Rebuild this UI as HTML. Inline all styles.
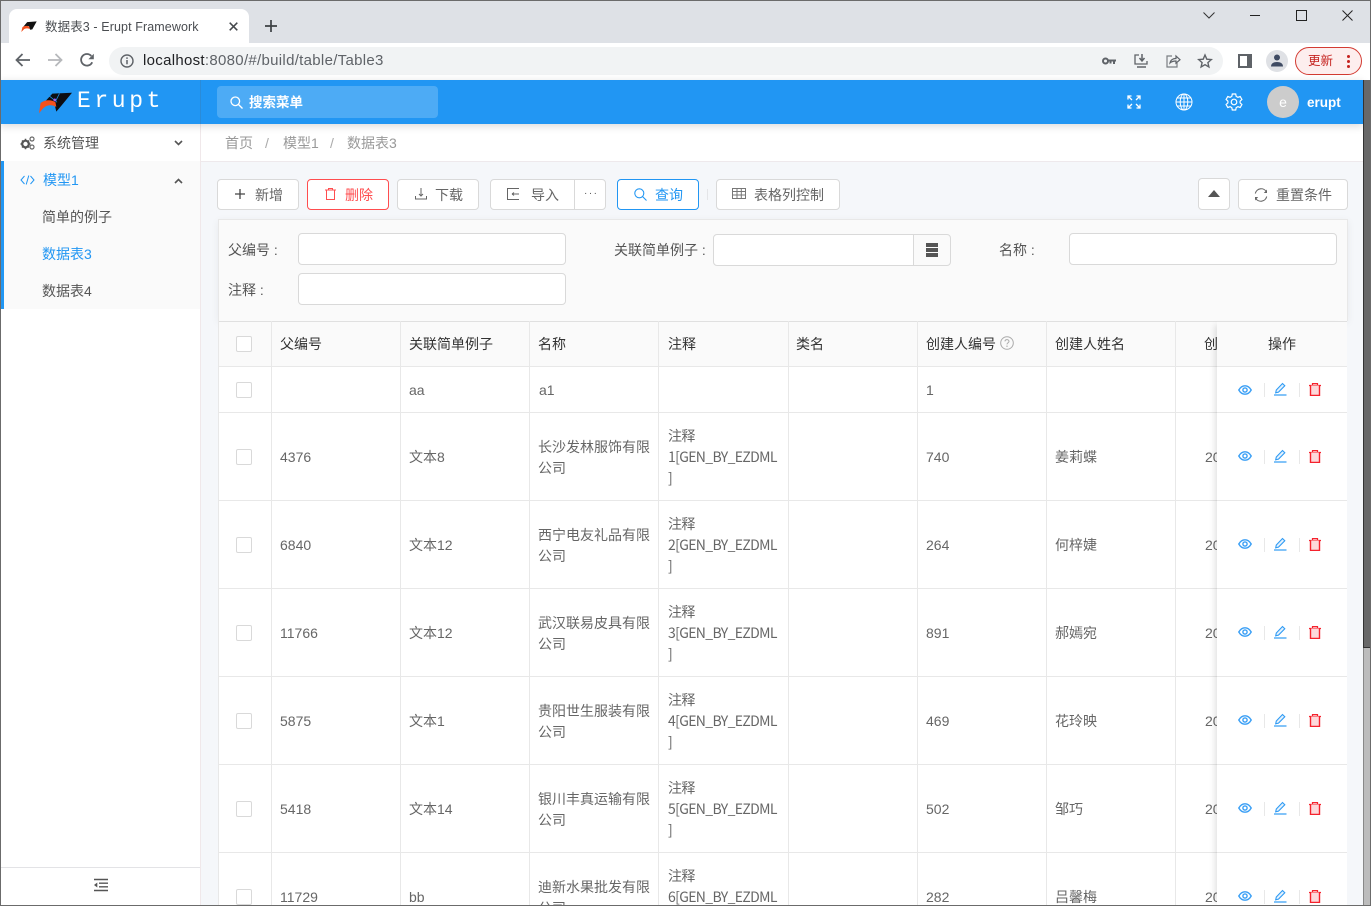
<!DOCTYPE html>
<html lang="zh">
<head>
<meta charset="utf-8">
<title>数据表3 - Erupt Framework</title>
<style>
*{box-sizing:border-box}
html,body{margin:0;padding:0;width:1371px;height:906px;overflow:hidden;background:#fff}
body{position:relative;font-family:"Liberation Sans","Noto Sans CJK SC",sans-serif;font-size:14px;color:#666}
.a,.t,svg.i{position:absolute}
.t{white-space:nowrap;line-height:20px}
.btn{position:absolute;top:179px;height:31px;background:#fff;border:1px solid #d9d9d9;border-radius:4px}
.inp{position:absolute;height:32px;background:#fff;border:1px solid #d9d9d9;border-radius:4px}
.lbl{color:#555}
.r{position:absolute;left:218px;width:1129px;height:88px;border-bottom:1px solid #e8e8e8;background:#fff}
.r>div{position:absolute;top:0;height:87px;padding-top:2px;display:flex;align-items:center;line-height:21px;white-space:nowrap;color:#666}
.r>div.c4{font-family:"Noto Sans CJK SC","Liberation Sans",sans-serif;letter-spacing:-.65px}
.c1{left:62px}.c2{left:191px}.c3{left:320px}.c4{left:450px}.c6{left:708px}.c7{left:837px}.c8{left:987px}
.cb{position:absolute;left:236px;width:16px;height:16px;background:#fff;border:1px solid #d9d9d9;border-radius:2px}
.vl{position:absolute;top:321px;width:1px;height:585px;background:#e8e8e8}
.th{position:absolute;top:334px;line-height:20px;color:#333;white-space:nowrap}
.fx{position:absolute;left:0;width:130px;height:88px;border-bottom:1px solid #e8e8e8}
.sep{position:absolute;width:1px;height:14px;background:#e8e8e8}
svg{overflow:visible}
</style>
</head>
<body>
<svg width="0" height="0" style="position:absolute">
<defs>
<symbol id="eye" viewBox="0 0 14 10"><path d="M.8 5C2.500 2 4.600.8 7 .8S11.500 2 13.200 5C11.500 8 9.400 9.200 7 9.200S2.500 8 .8 5z" fill="none" stroke="#3a9ff5" stroke-width="1.400"/><circle cx="7" cy="5" r="2.100" fill="none" stroke="#3a9ff5" stroke-width="1.400"/></symbol>
<symbol id="edit" viewBox="0 0 14 14"><path d="M1 13h12.500" stroke="#2f9bf4" stroke-width="1.200" fill="none"/><path d="M2.700 10.800l.6-2.800L9.500 1.500l2.300 2.200-6.300 6.400z" fill="#e3f1fd" stroke="#2f9bf4" stroke-width="1.100"/></symbol>
<symbol id="trash" viewBox="0 0 12 13"><path d="M0 2.500h12M3.500 2.500V.6h5v1.900" fill="none" stroke="#f5222d" stroke-width="1.200"/><path d="M1.500 2.500v10h9v-10" fill="#fdd9db" stroke="#f5222d" stroke-width="1.400"/></symbol>
</defs>
</svg>

<!-- browser chrome -->
<div class="a" style="left:0;top:0;width:1371px;height:43px;background:#dee1e6"></div>
<div class="a" style="left:9px;top:9px;width:240px;height:34px;background:#fff;border-radius:8px 8px 0 0"></div>
<svg class="i" style="left:20px;top:21px" width="18" height="11" viewBox="0 0 42 30"><path d="M6 15L16 3l26-2-12 22-6 1-3-10z" fill="#111"/><path d="M0 30l3-13c5-4 14-5 19-1l1 6c-6-3-14-2-17 2z" fill="#f4511e"/></svg>
<div class="t" style="left:45px;top:17px;font-size:12.500px;color:#4a4d51;letter-spacing:.1px">数据表3 - Erupt Framework</div>
<svg class="i" style="left:229px;top:22px" width="9" height="9" viewBox="0 0 9 9"><path d="M.7.7l7.600 7.600M8.300.7L.7 8.300" stroke="#45484c" stroke-width="1.500"/></svg>
<svg class="i" style="left:265px;top:20px" width="12" height="12" viewBox="0 0 12 12"><path d="M6 0v12M0 6h12" stroke="#3c4043" stroke-width="1.700"/></svg>
<svg class="i" style="left:1203px;top:12px" width="12" height="7" viewBox="0 0 12 7"><path d="M.5.500L6 6l5.500-5.500" fill="none" stroke="#333" stroke-width="1"/></svg>
<div class="a" style="left:1250px;top:15px;width:10px;height:1px;background:#222"></div>
<div class="a" style="left:1296px;top:10px;width:11px;height:11px;border:1.300px solid #222"></div>
<svg class="i" style="left:1342px;top:10px" width="11" height="11" viewBox="0 0 11 11"><path d="M.5.500l10 10M10.500.500l-10 10" stroke="#222" stroke-width="1"/></svg>

<div class="a" style="left:0;top:43px;width:1371px;height:37px;background:#fff"></div>
<svg class="i" style="left:15px;top:53px" width="16" height="14" viewBox="0 0 16 14"><path d="M15 7H2M7.500 1L1.500 7l6 6" fill="none" stroke="#5f6368" stroke-width="1.800"/></svg>
<svg class="i" style="left:47px;top:53px" width="16" height="14" viewBox="0 0 16 14"><path d="M1 7h13M8.500 1l6 6-6 6" fill="none" stroke="#b6b8bb" stroke-width="1.800"/></svg>
<svg class="i" style="left:80px;top:53px" width="14" height="14" viewBox="0 0 14 14"><path d="M12.200 9.200A5.800 5.800 0 1 1 11.300 3" fill="none" stroke="#5f6368" stroke-width="1.800"/><path d="M13.800.8v5.400H8.400z" fill="#5f6368"/></svg>
<div class="a" style="left:109px;top:47px;width:1114px;height:28px;background:#f1f3f4;border-radius:14px"></div>
<svg class="i" style="left:120px;top:54px" width="14" height="14" viewBox="0 0 14 14"><circle cx="7" cy="7" r="6" fill="none" stroke="#5f6368" stroke-width="1.400"/><path d="M7 6v4.200M7 3.400v1.500" stroke="#5f6368" stroke-width="1.500"/></svg>
<div class="t" style="left:143px;top:51px;font-size:15px;letter-spacing:.3px;color:#5f6368"><span style="color:#202124">localhost</span>:8080/#/build/table/Table3</div>
<svg class="i" style="left:1102px;top:57px" width="14" height="8" viewBox="0 0 14 8"><circle cx="3.500" cy="4" r="2.500" fill="none" stroke="#5f6368" stroke-width="2"/><path d="M6 2.500h8v2h-1v2.500h-2V4.500H9.500V6.500h-2V4.500H6z" fill="#5f6368"/></svg>
<svg class="i" style="left:1134px;top:54px" width="14" height="14" viewBox="0 0 14 14"><path d="M5 1H1v9h12V7" fill="none" stroke="#5f6368" stroke-width="1.300"/><path d="M3 13h9" stroke="#5f6368" stroke-width="1.500"/><path d="M8 0v6M5.500 4L8 7l2.500-3" fill="none" stroke="#5f6368" stroke-width="1.500"/></svg>
<svg class="i" style="left:1166px;top:54px" width="14" height="14" viewBox="0 0 14 14"><path d="M6 2H1v11h10V9" fill="none" stroke="#7a7e82" stroke-width="1.200"/><path d="M4 9c.5-3 3-4.500 6-4.500V2l4 3.700-4 3.500V7C8 7 5.500 7.500 4 9z" fill="none" stroke="#5f6368" stroke-width="1.200"/></svg>
<svg class="i" style="left:1198px;top:54px" width="14" height="14" viewBox="0 0 14 14"><path d="M7 1l1.800 4.200 4.500.4-3.400 3 1 4.400L7 10.700 3.100 13l1-4.400-3.400-3 4.500-.4z" fill="none" stroke="#5f6368" stroke-width="1.400"/></svg>
<div class="a" style="left:1238px;top:54px;width:14px;height:14px;border:2px solid #5f6368;border-right-width:5px;background:#fff"></div>
<div class="a" style="left:1266px;top:50px;width:22px;height:22px;border-radius:50%;background:#dfe1e5"></div>
<svg class="i" style="left:1271px;top:54px" width="12" height="13" viewBox="0 0 12 13"><circle cx="6" cy="3.500" r="3" fill="#3f4b63"/><path d="M0 12.500c0-3 2.500-4.500 6-4.500s6 1.500 6 4.500z" fill="#3f4b63"/></svg>
<div class="a" style="left:1295px;top:47px;width:67px;height:28px;background:#fdeeee;border:1px solid #d33b32;border-radius:14px"></div>
<div class="t" style="left:1308px;top:51px;font-size:12.500px;color:#c5221f">更新</div>
<div class="a" style="left:1347px;top:55px;width:3px;height:3px;border-radius:50%;background:#c5221f"></div>
<div class="a" style="left:1347px;top:60px;width:3px;height:3px;border-radius:50%;background:#c5221f"></div>
<div class="a" style="left:1347px;top:65px;width:3px;height:3px;border-radius:50%;background:#c5221f"></div>

<!-- page bg -->
<div class="a" style="left:0;top:124px;width:1363px;height:782px;background:#f5f7fa"></div>

<!-- sidebar -->
<div class="a" style="left:0;top:124px;width:201px;height:782px;background:#fff;border-right:1px solid #f0e8ea"></div>
<div class="a" style="left:1px;top:161px;width:199px;height:148px;background:#fafafa"></div>
<div class="a" style="left:1px;top:161px;width:3px;height:148px;background:#2196f3"></div>
<svg class="i" style="left:20px;top:136px" width="15" height="14" viewBox="0 0 15 14"><circle cx="5.500" cy="8" r="3.300" fill="none" stroke="#555" stroke-width="2.200"/><path d="M5.500 2.800v2M5.500 11.200v2M.5 8h2M8.500 8h2M2 4.500l1.400 1.400M9 4.500L7.600 5.900M2 11.500l1.400-1.400M9 11.500l-1.400-1.400" stroke="#555" stroke-width="1.500"/><circle cx="12" cy="3" r="2" fill="none" stroke="#666" stroke-width="1.200"/><circle cx="12" cy="11" r="2" fill="none" stroke="#666" stroke-width="1.200"/></svg>
<div class="t" style="left:43px;top:133px;color:#555">系统管理</div>
<svg class="i" style="left:174px;top:140px" width="9" height="6" viewBox="0 0 9 6"><path d="M1 1l3.500 3.500L8 1" fill="none" stroke="#555" stroke-width="1.600"/></svg>
<svg class="i" style="left:20px;top:175px" width="15" height="10" viewBox="0 0 15 10"><path d="M4.500 1L1 5l3.500 4M10.500 1L14 5l-3.500 4M8.800.5L6.200 9.500" fill="none" stroke="#2196f3" stroke-width="1"/></svg>
<div class="t" style="left:43px;top:170px;color:#2196f3">模型1</div>
<svg class="i" style="left:174px;top:178px" width="9" height="6" viewBox="0 0 9 6"><path d="M1 5l3.500-3.500L8 5" fill="none" stroke="#555" stroke-width="1.600"/></svg>
<div class="t" style="left:42px;top:207px;color:#555">简单的例子</div>
<div class="t" style="left:42px;top:244px;color:#2196f3">数据表3</div>
<div class="t" style="left:42px;top:281px;color:#555">数据表4</div>
<div class="a" style="left:1px;top:867px;width:199px;height:1px;background:#e3e3e6"></div>
<svg class="i" style="left:93px;top:878px" width="16" height="14" viewBox="0 0 16 14"><path d="M1 1.500h14M6 5.200h9M6 8.800h9M1 12.500h14" stroke="#555" stroke-width="1.400"/><path d="M4.300 4.500v5L1 7z" fill="#555"/></svg>

<!-- breadcrumb -->
<div class="a" style="left:201px;top:124px;width:1162px;height:38px;background:#fff;border-bottom:1px solid #eee9ec"></div>
<div class="t" style="left:225px;top:133px;color:#999">首页</div>
<div class="t" style="left:265px;top:133px;color:#aaa">/</div>
<div class="t" style="left:283px;top:133px;color:#999">模型1</div>
<div class="t" style="left:330px;top:133px;color:#aaa">/</div>
<div class="t" style="left:347px;top:133px;color:#999">数据表3</div>

<!-- header -->
<div class="a" style="left:0;top:80px;width:1363px;height:44px;background:#2196f3;box-shadow:0 2px 8px rgba(0,0,0,.15)"></div>
<div class="a" style="left:200px;top:80px;width:1px;height:44px;background:#2a8bd8"></div>
<svg class="i" style="left:39px;top:92px" width="33" height="22" viewBox="0 0 42 28"><path d="M6 14L17 2 42 1 28 18l-6 7-3-13z" fill="#0d0d12"/><path d="M0 27l2-13C7 10 15 9 21 13l1 6C15 15 9 17 5 21z" fill="#f4511e"/><path d="M13 5l10 8M26 2l-5 10" stroke="#2196f3" stroke-width=".9"/><circle cx="20" cy="10" r="1.700" fill="#a05cf0"/></svg>
<div class="t" style="left:77px;top:87px;font-family:'Liberation Mono',monospace;font-size:23px;line-height:28px;color:#fff;letter-spacing:3.600px">Erupt</div>
<div class="a" style="left:217px;top:86px;width:221px;height:32px;background:rgba(255,255,255,.2);border-radius:4px"></div>
<svg class="i" style="left:230px;top:96px" width="13" height="13" viewBox="0 0 13 13"><circle cx="5.300" cy="5.300" r="4.300" fill="none" stroke="#fff" stroke-width="1.300"/><path d="M8.500 8.500l4 4" stroke="#fff" stroke-width="1.300"/></svg>
<div class="t" style="left:249px;top:93px;color:#fff;font-weight:bold;font-size:13.500px">搜索菜单</div>
<svg class="i" style="left:1127px;top:95px" width="14" height="14" viewBox="0 0 14 14"><path d="M1 4.500V1h3.500M1 1l4 4M13 4.500V1H9.500M13 1L9 5M1 9.500V13h3.500M1 13l4-4M13 9.500V13H9.500M13 13L9 9" fill="none" stroke="#fff" stroke-width="1.300"/></svg>
<svg class="i" style="left:1175px;top:93px" width="18" height="18" viewBox="0 0 18 18" fill="none" stroke="#fff" stroke-width="1"><circle cx="9" cy="9" r="8"/><ellipse cx="9" cy="9" rx="3.800" ry="8"/><path d="M9 1v16M1 9h16M2 5h14M2 13h14"/></svg>
<svg class="i" style="left:1225px;top:93px" width="18" height="18" viewBox="0 0 18 18"><path d="M7.300 1h3.400l.5 2.400 1.700.9 2.300-.8 1.700 3-1.800 1.600v1.800l1.800 1.600-1.700 3-2.300-.8-1.700.9-.5 2.400H7.300l-.5-2.400-1.700-.9-2.300.8-1.700-3 1.800-1.600V8.100L1.100 6.500l1.700-3 2.300.8 1.700-.9z" fill="none" stroke="#fff" stroke-width="1.200"/><circle cx="9" cy="9" r="2.800" fill="none" stroke="#fff" stroke-width="1.200"/></svg>
<div class="a" style="left:1267px;top:86px;width:32px;height:32px;border-radius:50%;background:#ccc"></div>
<div class="t" style="left:1267px;top:92px;width:32px;text-align:center;color:#fff">e</div>
<div class="t" style="left:1307px;top:93px;color:#fff;font-weight:bold;font-size:13.500px">erupt</div>

<!-- toolbar -->
<div class="btn" style="left:217px;width:82px"></div>
<svg class="i" style="left:235px;top:189px" width="10" height="10" viewBox="0 0 10 10"><path d="M5 0v10M0 5h10" stroke="#444" stroke-width="1.300"/></svg>
<div class="t" style="left:255px;top:185px;color:#666">新增</div>
<div class="btn" style="left:307px;width:82px;border-color:#ff4d4f"></div>
<svg class="i" style="left:325px;top:188px" width="11" height="12" viewBox="0 0 11 12"><path d="M0 2h11M3.500 2V.5h4V2M1.500 2v9.500h8V2" fill="none" stroke="#ff4d4f" stroke-width="1"/></svg>
<div class="t" style="left:345px;top:185px;color:#ff4d4f">删除</div>
<div class="btn" style="left:397px;width:82px"></div>
<svg class="i" style="left:415px;top:188px" width="12" height="12" viewBox="0 0 12 12"><path d="M6 0v8M4 6l2 2 2-2M.5 8v3h11V8" fill="none" stroke="#666" stroke-width="1"/></svg>
<div class="t" style="left:435px;top:185px;color:#666">下载</div>
<div class="btn" style="left:490px;width:116px"></div>
<div class="a" style="left:574px;top:179px;width:1px;height:31px;background:#d9d9d9"></div>
<svg class="i" style="left:507px;top:188px" width="13" height="12" viewBox="0 0 13 12"><path d="M12 .5H.5v11H12M5 6h7M5 6l2-1.500M5 6l2 1.500" fill="none" stroke="#666" stroke-width="1"/></svg>
<div class="t" style="left:531px;top:185px;color:#666">导入</div>
<div class="t" style="left:584px;top:184px;color:#555;font-size:10px;letter-spacing:1.500px">···</div>
<div class="btn" style="left:617px;width:82px;border-color:#2196f3"></div>
<svg class="i" style="left:634px;top:188px" width="13" height="13" viewBox="0 0 13 13"><circle cx="5.300" cy="5.300" r="4.500" fill="none" stroke="#2196f3" stroke-width="1.100"/><path d="M8.500 8.500l4 4" stroke="#2196f3" stroke-width="1.100"/></svg>
<div class="t" style="left:655px;top:185px;color:#2196f3">查询</div>
<div class="a" style="left:707px;top:189px;width:1px;height:11px;background:#e4e5e8"></div>
<div class="btn" style="left:716px;width:124px"></div>
<svg class="i" style="left:732px;top:188px" width="14" height="11" viewBox="0 0 14 11"><path d="M.5.500h13v10H.5zM.5 3.500h13M.5 7h13M5 .5v10M9.300.5v10" fill="none" stroke="#777" stroke-width="1"/></svg>
<div class="t" style="left:754px;top:185px;color:#666">表格列控制</div>
<div class="btn" style="left:1198px;top:178px;width:32px;height:32px"></div>
<svg class="i" style="left:1208px;top:190px" width="12" height="7" viewBox="0 0 12 7"><path d="M6 0l6 7H0z" fill="#555"/></svg>
<div class="btn" style="left:1238px;width:110px"></div>
<svg class="i" style="left:1254px;top:188px" width="14" height="14" viewBox="0 0 14 14"><path d="M12.500 4A6 6 0 0 0 1.300 5.500M1.500 10A6 6 0 0 0 12.700 8.500" fill="none" stroke="#666" stroke-width="1.100"/><path d="M13 1.500V5H9.800zM1 12.500V9h3.200z" fill="#666"/></svg>
<div class="t" style="left:1276px;top:185px;color:#666">重置条件</div>

<!-- search panel -->
<div class="a" style="left:218px;top:219px;width:1130px;height:102px;background:#fafafa;border:1px solid #e8e8e8;border-bottom:0;box-shadow:0 2px 8px rgba(0,0,0,.06)"></div>
<div class="t lbl" style="left:228px;top:240px">父编号 :</div>
<div class="inp" style="left:298px;top:233px;width:268px"></div>
<div class="t lbl" style="left:614px;top:240px">关联简单例子 :</div>
<div class="inp" style="left:713px;top:234px;width:238px;background:#fafafa"></div>
<div class="a" style="left:714px;top:235px;width:200px;height:30px;background:#fff;border-right:1px solid #d9d9d9;border-radius:4px 0 0 4px"></div>
<svg class="i" style="left:926px;top:243px" width="12" height="14" viewBox="0 0 12 14"><path d="M0 0h12v4H0zM0 5h12v4H0zM0 10h12v4H0z" fill="#555"/></svg>
<div class="t lbl" style="left:999px;top:240px">名称 :</div>
<div class="inp" style="left:1069px;top:233px;width:268px"></div>
<div class="t lbl" style="left:228px;top:280px">注释 :</div>
<div class="inp" style="left:298px;top:273px;width:268px"></div>

<!-- table -->
<div class="a" style="left:218px;top:321px;width:1129px;height:46px;background:#fafafa;border-top:1px solid #e0e0e0;border-bottom:1px solid #e8e8e8"></div>
<div class="a" style="left:218px;top:367px;width:1129px;height:46px;background:#fff;border-bottom:1px solid #e8e8e8"></div>

<div class="r" style="top:413px"><div class="c1">4376</div><div class="c2">文本8</div><div class="c3">长沙发林服饰有限<br>公司</div><div class="c4">注释<br>1[GEN_BY_EZDML<br>]</div><div class="c6">740</div><div class="c7">姜莉蝶</div><div class="c8">20</div></div>
<div class="r" style="top:501px"><div class="c1">6840</div><div class="c2">文本12</div><div class="c3">西宁电友礼品有限<br>公司</div><div class="c4">注释<br>2[GEN_BY_EZDML<br>]</div><div class="c6">264</div><div class="c7">何梓婕</div><div class="c8">20</div></div>
<div class="r" style="top:589px"><div class="c1">11766</div><div class="c2">文本12</div><div class="c3">武汉联易皮具有限<br>公司</div><div class="c4">注释<br>3[GEN_BY_EZDML<br>]</div><div class="c6">891</div><div class="c7">郝嫣宛</div><div class="c8">20</div></div>
<div class="r" style="top:677px"><div class="c1">5875</div><div class="c2">文本1</div><div class="c3">贵阳世生服装有限<br>公司</div><div class="c4">注释<br>4[GEN_BY_EZDML<br>]</div><div class="c6">469</div><div class="c7">花玲映</div><div class="c8">20</div></div>
<div class="r" style="top:765px"><div class="c1">5418</div><div class="c2">文本14</div><div class="c3">银川丰真运输有限<br>公司</div><div class="c4">注释<br>5[GEN_BY_EZDML<br>]</div><div class="c6">502</div><div class="c7">邹巧</div><div class="c8">20</div></div>
<div class="r" style="top:853px;height:53px;border:0;overflow:hidden"><div class="c1">11729</div><div class="c2">bb</div><div class="c3">迪新水果批发有限<br>公司</div><div class="c4">注释<br>6[GEN_BY_EZDML<br>]</div><div class="c6">282</div><div class="c7">吕馨梅</div><div class="c8">20</div></div>

<div class="vl" style="left:218px"></div>
<div class="vl" style="left:271px"></div>
<div class="vl" style="left:400px"></div>
<div class="vl" style="left:529px"></div>
<div class="vl" style="left:658px"></div>
<div class="vl" style="left:788px"></div>
<div class="vl" style="left:917px"></div>
<div class="vl" style="left:1046px"></div>
<div class="vl" style="left:1175px"></div>

<div class="th" style="left:280px">父编号</div>
<div class="th" style="left:409px">关联简单例子</div>
<div class="th" style="left:538px">名称</div>
<div class="th" style="left:668px">注释</div>
<div class="th" style="left:796px">类名</div>
<div class="th" style="left:926px">创建人编号</div>
<svg class="i" style="left:1000px;top:336px" width="14" height="14" viewBox="0 0 14 14"><circle cx="7" cy="7" r="6.300" fill="none" stroke="#aaa" stroke-width="1"/><path d="M5 5.400C5 4.200 6 3.600 7 3.600s2 .7 2 1.800c0 1.300-2 1.500-2 3" fill="none" stroke="#aaa" stroke-width="1"/><circle cx="7" cy="10.200" r=".7" fill="#aaa"/></svg>
<div class="th" style="left:1055px">创建人姓名</div>
<div class="th" style="left:1204px">创建</div>
<div class="t" style="left:409px;top:380px;color:#666">aa</div>
<div class="t" style="left:539px;top:380px;color:#666">a1</div>
<div class="t" style="left:926px;top:380px;color:#666">1</div>

<div class="cb" style="top:336px"></div>
<div class="cb" style="top:382px"></div>
<div class="cb" style="top:449px"></div>
<div class="cb" style="top:537px"></div>
<div class="cb" style="top:625px"></div>
<div class="cb" style="top:713px"></div>
<div class="cb" style="top:801px"></div>
<div class="cb" style="top:889px"></div>

<!-- fixed operations column -->
<div class="a" style="left:1217px;top:321px;width:130px;height:585px;background:#fff;box-shadow:-6px 0 6px -4px rgba(0,0,0,.12);overflow:hidden">
  <div class="fx" style="top:0;height:46px;background:#fafafa;border-top:1px solid #e0e0e0"></div>
  <div class="fx" style="top:46px;height:46px"></div>
  <div class="fx" style="top:92px"></div>
  <div class="fx" style="top:180px"></div>
  <div class="fx" style="top:268px"></div>
  <div class="fx" style="top:356px"></div>
  <div class="fx" style="top:444px"></div>
</div>
<div class="th" style="left:1268px">操作</div>

<svg class="i" style="left:1238px;top:385px" width="14" height="10"><use href="#eye"/></svg><div class="sep" style="left:1264px;top:383px"></div><svg class="i" style="left:1273px;top:382px" width="14" height="14"><use href="#edit"/></svg><div class="sep" style="left:1299px;top:383px"></div><svg class="i" style="left:1309px;top:383px" width="12" height="13"><use href="#trash"/></svg>
<svg class="i" style="left:1238px;top:451px" width="14" height="10"><use href="#eye"/></svg><div class="sep" style="left:1264px;top:450px"></div><svg class="i" style="left:1273px;top:449px" width="14" height="14"><use href="#edit"/></svg><div class="sep" style="left:1299px;top:450px"></div><svg class="i" style="left:1309px;top:450px" width="12" height="13"><use href="#trash"/></svg>
<svg class="i" style="left:1238px;top:539px" width="14" height="10"><use href="#eye"/></svg><div class="sep" style="left:1264px;top:538px"></div><svg class="i" style="left:1273px;top:537px" width="14" height="14"><use href="#edit"/></svg><div class="sep" style="left:1299px;top:538px"></div><svg class="i" style="left:1309px;top:538px" width="12" height="13"><use href="#trash"/></svg>
<svg class="i" style="left:1238px;top:627px" width="14" height="10"><use href="#eye"/></svg><div class="sep" style="left:1264px;top:626px"></div><svg class="i" style="left:1273px;top:625px" width="14" height="14"><use href="#edit"/></svg><div class="sep" style="left:1299px;top:626px"></div><svg class="i" style="left:1309px;top:626px" width="12" height="13"><use href="#trash"/></svg>
<svg class="i" style="left:1238px;top:715px" width="14" height="10"><use href="#eye"/></svg><div class="sep" style="left:1264px;top:714px"></div><svg class="i" style="left:1273px;top:713px" width="14" height="14"><use href="#edit"/></svg><div class="sep" style="left:1299px;top:714px"></div><svg class="i" style="left:1309px;top:714px" width="12" height="13"><use href="#trash"/></svg>
<svg class="i" style="left:1238px;top:803px" width="14" height="10"><use href="#eye"/></svg><div class="sep" style="left:1264px;top:802px"></div><svg class="i" style="left:1273px;top:801px" width="14" height="14"><use href="#edit"/></svg><div class="sep" style="left:1299px;top:802px"></div><svg class="i" style="left:1309px;top:802px" width="12" height="13"><use href="#trash"/></svg>
<svg class="i" style="left:1238px;top:891px" width="14" height="10"><use href="#eye"/></svg><div class="sep" style="left:1264px;top:890px"></div><svg class="i" style="left:1273px;top:889px" width="14" height="14"><use href="#edit"/></svg><div class="sep" style="left:1299px;top:890px"></div><svg class="i" style="left:1309px;top:890px" width="12" height="13"><use href="#trash"/></svg>

<!-- scrollbar -->
<div class="a" style="left:1363px;top:80px;width:7px;height:568px;background:#686868;border-left:1px solid #333;border-bottom:1px solid #333"></div>
<div class="a" style="left:1363px;top:648px;width:7px;height:258px;background:#bcbcbc;border-left:1px solid #888"></div>

<!-- window border -->
<div class="a" style="left:0;top:0;width:1371px;height:1px;background:#6b6b6b"></div>
<div class="a" style="left:0;top:0;width:1px;height:906px;background:#6b6b6b"></div>
<div class="a" style="left:1370px;top:0;width:1px;height:906px;background:#6b6b6b"></div>
<div class="a" style="left:0;top:905px;width:1371px;height:1px;background:#6b6b6b"></div>
</body>
</html>
